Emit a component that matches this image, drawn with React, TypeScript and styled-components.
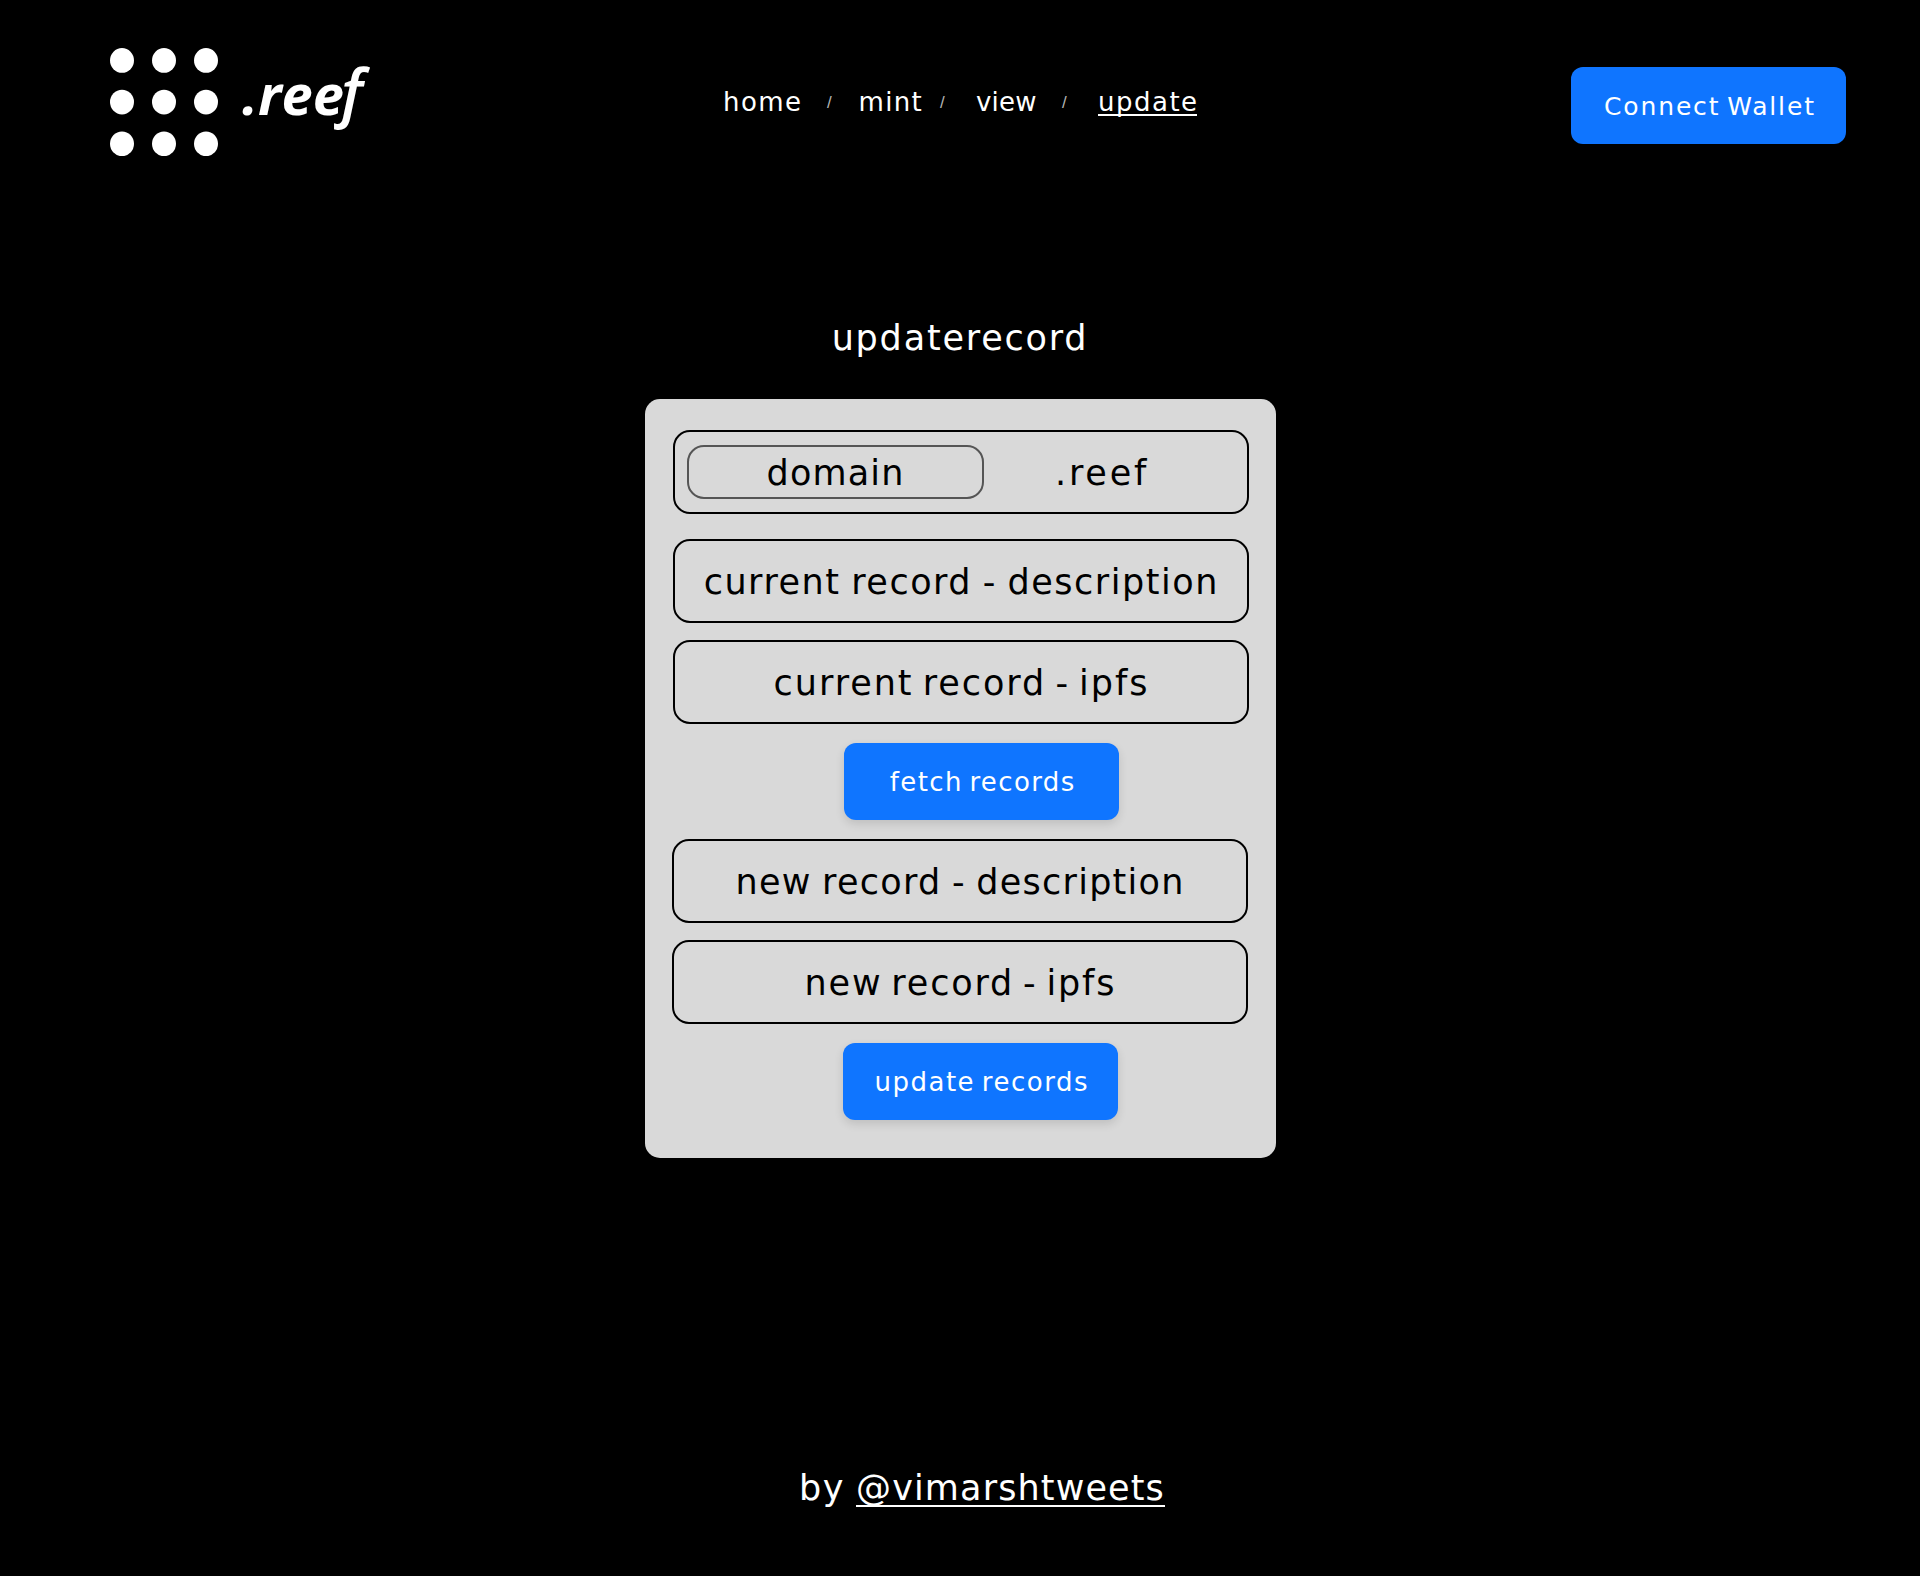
import React from "react";
import styled, { createGlobalStyle } from "styled-components";

const GlobalStyle = createGlobalStyle`
  *, *::before, *::after { box-sizing: border-box; }
  body {
    margin: 0;
    background: #000;
    color: #fff;
    font-family: "DejaVu Sans", sans-serif;
  }
`;

const Page = styled.div`
  display: flex;
  flex-direction: column;
  height: 1576px;
  overflow: hidden;
`;

const Header = styled.header`
  display: grid;
  grid-template-columns: 613px 1fr 275px;
  align-items: start;
  height: 318px;
  padding: 48px 74px 0 110px;
`;

const Brand = styled.a`
  display: flex;
  gap: 24px;
  color: #fff;
`;

const BrandName = styled.span`
  padding-top: 5px;
  font: italic 700 56px/80px "Open Sans", sans-serif;
  white-space: nowrap;
`;

const TallLetter = styled.span`
  margin-left: -3px;
  font-size: 63px;
  font-weight: 600;
  line-height: 1px;
`;

const Nav = styled.nav`
  display: grid;
  grid-template-columns: 104px 31.5px 81.5px 36px 86px 36px 99px;
  margin-top: 39px;
`;

const NavLink = styled.a<{ $spacing: number; $active?: boolean }>`
  height: ${(p) => (p.$active ? 29 : 30)}px;
  border-bottom: ${(p) => (p.$active ? "2px solid #fff" : "none")};
  color: #fff;
  font-size: 26px;
  line-height: 30px;
  letter-spacing: ${(p) => p.$spacing}px;
  white-space: nowrap;
`;

const Slash = styled.span`
  color: #b4b4b4;
  font: 17px/32px "Liberation Sans", Arial, sans-serif;
`;

const Button = styled.button<{ $spacing: number }>`
  display: flex;
  justify-content: center;
  align-items: center;
  width: 275px;
  height: 77px;
  padding: 1px 0 0 ${(p) => p.$spacing + 1}px;
  border: 0;
  border-radius: 12px;
  background: #0f75ff;
  box-shadow: 0 4px 10px rgba(0, 0, 0, 0.12);
  color: #fff;
  font: 26px/30px "DejaVu Sans", sans-serif;
  letter-spacing: ${(p) => p.$spacing}px;
  word-spacing: -3px;
  white-space: nowrap;
`;

const ConnectButton = styled(Button)`
  margin-top: 19px;
  padding-top: 3px;
  font-size: 25px;
`;

const Main = styled.main`
  display: flex;
  flex-direction: column;
  align-items: center;
`;

const Title = styled.h1`
  margin: 0 0 41px;
  font-size: 35px;
  font-weight: 400;
  line-height: 40px;
  letter-spacing: 1.8px;
`;

const Card = styled.section`
  display: flex;
  flex-direction: column;
  width: 631px;
  height: 759px;
  margin-left: 1px;
  padding: 31px 27px 0 28px;
  border-radius: 15px;
  background: #d9d9d9;
  color: #000;
`;

const Field = styled.div<{ $spacing: number; $wordSpacing?: number }>`
  display: flex;
  justify-content: center;
  align-items: center;
  height: 84px;
  padding: 1px 0 0 ${(p) => p.$spacing - 1}px;
  border: 2px solid #000;
  border-radius: 17px;
  font-size: 35px;
  line-height: 40px;
  letter-spacing: ${(p) => p.$spacing}px;
  word-spacing: ${(p) => p.$wordSpacing ?? -4}px;
  white-space: nowrap;
`;

const DomainRow = styled.div`
  display: grid;
  grid-template-columns: 297px 1fr;
  align-items: center;
  height: 84px;
  margin-bottom: 25px;
  padding: 0 0 0 12px;
  border: 2px solid #000;
  border-radius: 17px;
`;

const DomainInput = styled(Field)`
  height: 54px;
  border-color: #555;
`;

const Suffix = styled.span`
  padding: 1px 0 0 71px;
  font-size: 35px;
  line-height: 40px;
  letter-spacing: 2.8px;
`;

const Group = styled.div<{ $shift?: number }>`
  display: flex;
  flex-direction: column;
  gap: 17px;
  margin: 0 ${(p) => p.$shift ?? 0}px 19px ${(p) => -(p.$shift ?? 0)}px;
`;

const Action = styled.div`
  padding: 2px 0 0 171px;
`;

const Footer = styled.footer`
  display: flex;
  gap: 11px;
  margin-top: 310px;
  padding-left: 799px;
  font-size: 35px;
  line-height: 40px;
`;

const By = styled.span`
  width: 46px;
  letter-spacing: 1.6px;
`;

const Handle = styled.a`
  width: 309px;
  height: 39px;
  border-bottom: 2px solid #fff;
  color: #fff;
  letter-spacing: 1.13px;
  white-space: nowrap;
`;

const steps = [0, 1, 2];

function DotGrid() {
  return (
    <svg width="108" height="108" viewBox="0 0 108 108" fill="#fff" aria-hidden="true">
      {steps.map((row) =>
        steps.map((col) => (
          <ellipse key={`${row}-${col}`} cx={12 + col * 42} cy={12.4 + row * 41.7} rx="12" ry="12.4" />
        ))
      )}
    </svg>
  );
}

export default function App() {
  return (
    <Page>
      <GlobalStyle />
      <Header>
        <Brand>
          <DotGrid />
          <BrandName>.ree<TallLetter>f</TallLetter></BrandName>
        </Brand>
        <Nav>
          <NavLink $spacing={1.4}>home</NavLink>
          <Slash>/</Slash>
          <NavLink $spacing={1.3}>mint</NavLink>
          <Slash>/</Slash>
          <NavLink $spacing={0.2}>view</NavLink>
          <Slash>/</Slash>
          <NavLink $spacing={1.5} $active>update</NavLink>
        </Nav>
        <ConnectButton $spacing={1.85}>Connect Wallet</ConnectButton>
      </Header>
      <Main>
        <Title>updaterecord</Title>
        <Card>
          <DomainRow>
            <DomainInput $spacing={1.15}>domain</DomainInput>
            <Suffix>.reef</Suffix>
          </DomainRow>
          <Group>
            <Field $spacing={1.52} $wordSpacing={-2}>current record - description</Field>
            <Field $spacing={1.97}>current record - ipfs</Field>
            <Action>
              <Button $spacing={1.37}>fetch records</Button>
            </Action>
          </Group>
          <Group $shift={1}>
            <Field $spacing={1.27} $wordSpacing={-2}>new record - description</Field>
            <Field $spacing={1.82}>new record - ipfs</Field>
            <Action>
              <Button $spacing={1.5}>update records</Button>
            </Action>
          </Group>
        </Card>
      </Main>
      <Footer>
        <By>by</By>
        <Handle>@vimarshtweets</Handle>
      </Footer>
    </Page>
  );
}
